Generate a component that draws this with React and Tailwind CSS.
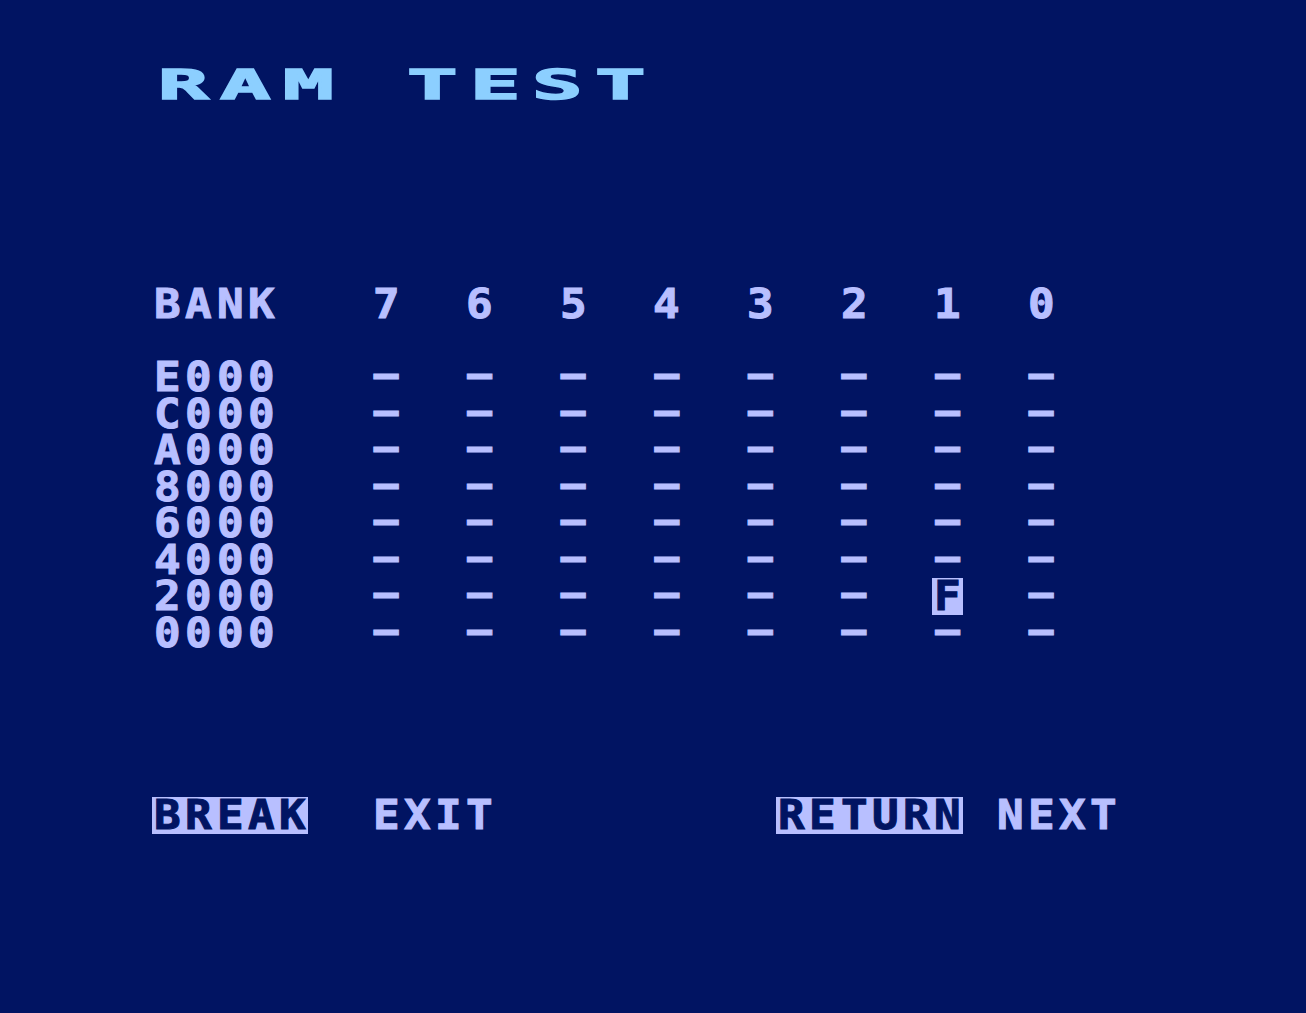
import React from "react";

const BANKS = ["E000", "C000", "A000", "8000", "6000", "4000", "2000", "0000"];
const COLUMNS = [7, 6, 5, 4, 3, 2, 1, 0];

// bank/column pairs that failed the test
const FAILED = { "2000": [1] };

// one character cell on the 40-column screen
const Cell = ({ ch, className = "" }) => (
  <span className={`inline-block w-[31.2px] text-center ${className}`}>
    <span className="inline-block scale-x-[1.08]">{ch === " " ? "\u00a0" : ch}</span>
  </span>
);

const Dash = () => (
  <span className="inline-block w-[31.2px] text-center relative -top-[3px]">{"\u2014"}</span>
);

const Chars = ({ text, inverse }) => (
  <span className={`inline-flex ${inverse ? "bg-[#b8bfff] text-[#011462]" : ""}`}>
    {text.split("").map((ch, i) => (
      <Cell key={i} ch={ch} />
    ))}
  </span>
);

const Row = ({ children }) => <div className="flex h-[36.5px]">{children}</div>;

const App = () => {
  return (
    <div className="min-h-screen w-full bg-[#011462] pt-[67px] pl-[152px] font-['DejaVu_Sans_Mono',monospace] text-[41px] leading-[36.5px] font-bold text-[#b8bfff] [-webkit-text-stroke:1px_currentColor] overflow-hidden">
      {/* double-width title line */}
      <Row>
        {"RAM TEST".split("").map((ch, i) => (
          <span key={i} className="inline-block w-[62.4px] text-center text-[#8ccfff] [-webkit-text-stroke:1.5px_currentColor]">
            <span className="inline-block scale-x-[2.05]">{ch === " " ? "\u00a0" : ch}</span>
          </span>
        ))}
      </Row>
      <Row />
      <Row />
      <Row />
      <Row />
      <Row />

      <Row>
        <span className="w-[218.4px]">
          <Chars text="BANK" />
        </span>
        {COLUMNS.map((c) => (
          <span key={c} className="w-[93.6px]">
            <Cell ch={String(c)} />
          </span>
        ))}
      </Row>
      <Row />

      {BANKS.map((bank) => (
        <Row key={bank}>
          <span className="w-[218.4px]">
            <Chars text={bank} />
          </span>
          {COLUMNS.map((c) => {
            const bad = (FAILED[bank] || []).includes(c);
            return (
              <span key={c} className="w-[93.6px]">
                {bad ? <Cell ch="F" className="bg-[#b8bfff] text-[#011462]" /> : <Dash />}
              </span>
            );
          })}
        </Row>
      ))}

      <Row />
      <Row />
      <Row />
      <Row />

      <Row>
        <span className="w-[218.4px]">
          <Chars text="BREAK" inverse />
        </span>
        <span className="w-[405.6px]">
          <Chars text="EXIT" />
        </span>
        <span className="w-[218.4px]">
          <Chars text="RETURN" inverse />
        </span>
        <Chars text="NEXT" />
      </Row>
    </div>
  );
};

export default App;
